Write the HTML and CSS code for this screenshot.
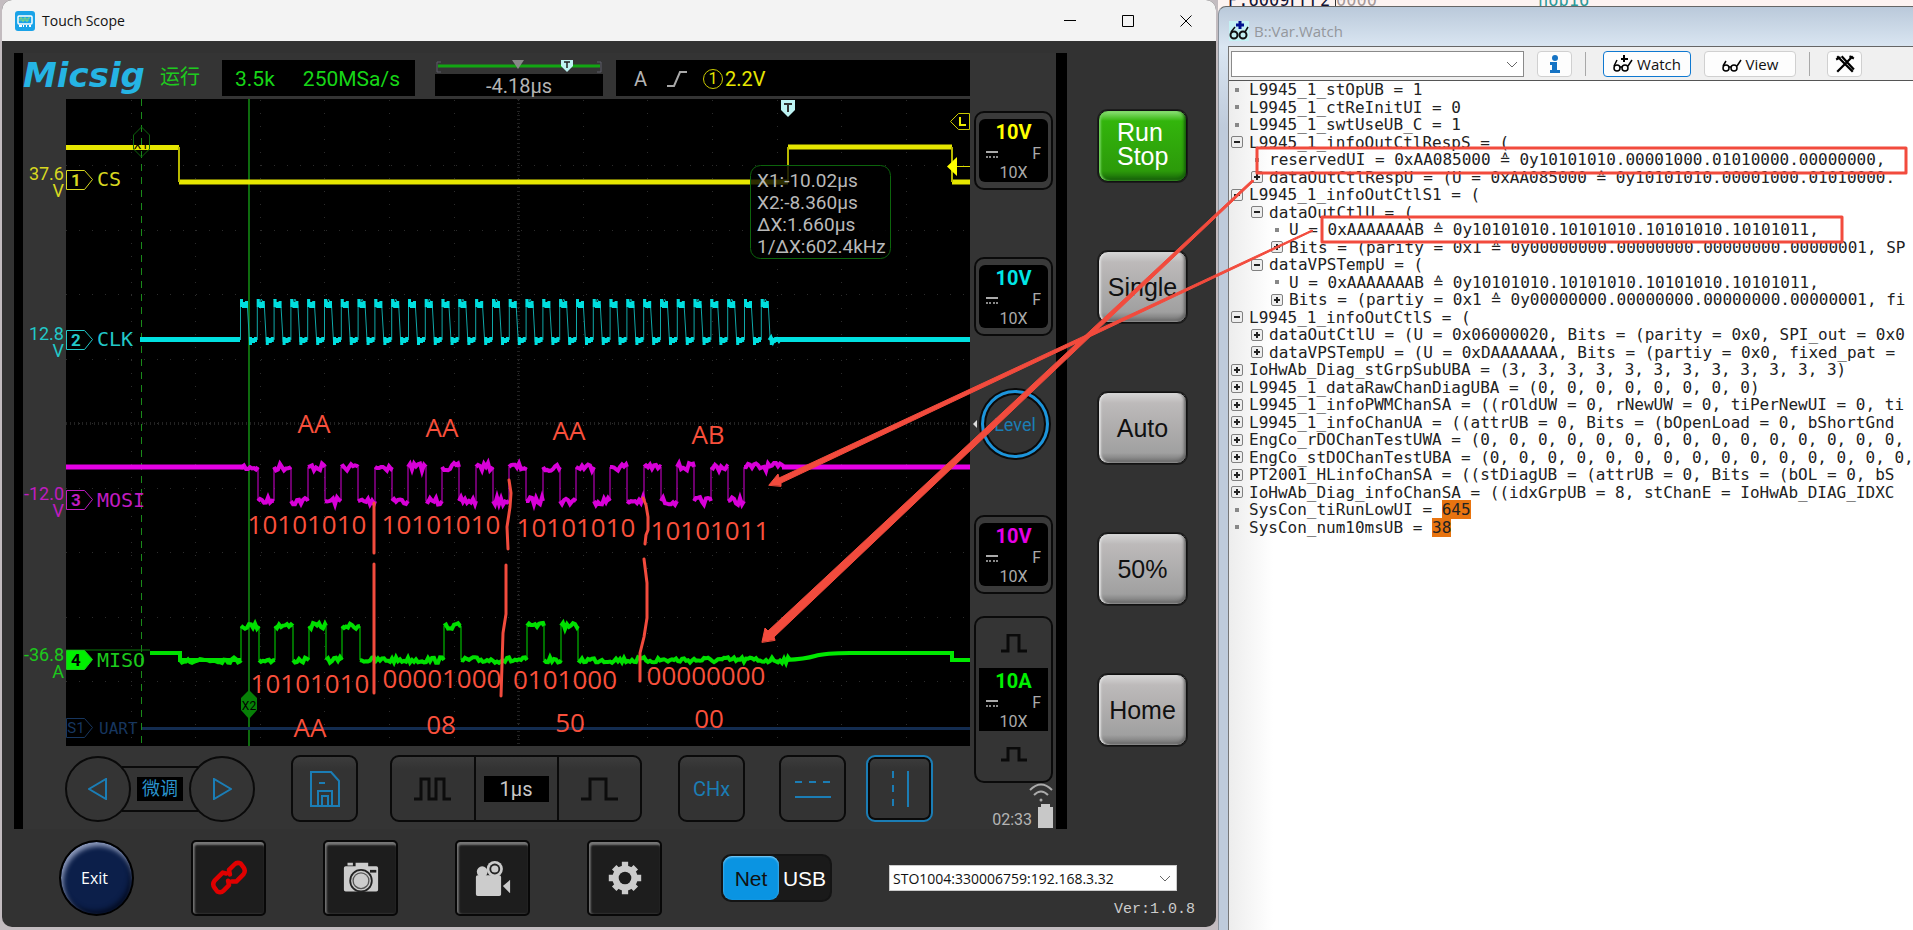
FILE: index.html
```html
<!DOCTYPE html>
<html lang="en">
<head>
  <meta charset="UTF-8">
  <meta name="viewport" content="width=device-width, initial-scale=1.0">
  <title>Touch Scope</title>
  <link rel="stylesheet" href="styles.css">
</head>
<body>
<div class="desktop">

  <!-- Oscilloscope window -->
  <main class="scope">
    <header class="titlebar">
      <svg class="app-icon" viewBox="0 0 20 20">
        <rect width="20" height="20" rx="3" fill="#1aa3e8"/>
        <rect x="3" y="5" width="14" height="8" rx="1" fill="none" stroke="#fff" stroke-width="1.5"/>
        <path d="M5 10V7h2v3h2V7h2v3h2V7h2" fill="none" stroke="#8fdc6a"/>
        <path d="M4 15h3m1 0h1m2 0h1m2 0h2" stroke="#fff" stroke-width="2"/>
      </svg>
      <h1>Touch Scope</h1>
      <button class="win-btn" aria-label="Minimize"><svg viewBox="0 0 12 12"><path d="M0 5.500h12"/></svg></button>
      <button class="win-btn" aria-label="Maximize"><svg viewBox="0 0 12 12"><path d="M.5 .5h11v11H.5z"/></svg></button>
      <button class="win-btn" aria-label="Close"><svg viewBox="0 0 12 12"><path d="M.5 .5l11 11m0-11l-11 11"/></svg></button>
    </header>

    <div class="scope-body">
      <section class="device">
        <div class="screen">
          <div class="status">
            <div class="logo">Micsig</div>
            <div class="run-state">运行</div>
            <div class="readout sampling"><span>3.5k</span><span>250MSa/s</span></div>
            <div class="timing">
              <svg viewBox="0 0 168 14">
                <path d="M6 2H2v10h4M162 2h4v10h-4" fill="none" stroke="#5c5c68"/>
                <path d="M3 6h162" stroke="#12a512" stroke-width="3"/>
                <path d="M77 0h12l-6 9z" fill="#888"/>
                <path d="M126 0h12v6l-6 6-6-6z" fill="#bdf3f3"/>
                <path d="M129 2h6m-3 0v6" stroke="#222" stroke-width="1.500"/>
              </svg>
              <div class="readout offset">-4.18µs</div>
            </div>
            <div class="readout trigger">
              <span class="mode">A</span>
              <svg viewBox="0 0 20 18"><path d="M0 16h7l6-14h7" fill="none" stroke="#a8a8a8" stroke-width="2"/></svg>
              <span class="source">1</span><span>2.2V</span>
            </div>
          </div>

          <svg class="plot" viewBox="23 99 947 647">
            <rect x="66" y="99" width="904" height="647" fill="#000"/>
            <g id="grid" class="grid"></g>
            <path class="grid-axis" d="M518.500 99V746M66 423.500H970"/>
            <path class="cursor dashed" d="M141.500 99V746"/>
            <path class="cursor" d="M249 99V746"/>
            <path d="M142 728.500H970" stroke="#132c50" stroke-width="3"/>
            <g id="traces" fill="none"></g>

            <path d="M141.500 127l8 8v14l-8 8-8-8v-14z" fill="none" stroke="#0d640d"/>
            <text class="tiny" x="141" y="149" fill="#0d780d">X1</text>
            <path d="M249 690l8 8v12l-8 9-8-9v-12z" fill="#078007"/>
            <text class="tiny" x="249" y="710" fill="#001c00">X2</text>

            <g class="ch1">
              <text class="level" x="64" y="180">37.6</text><text class="level" x="64" y="197">V</text>
              <path class="tag" d="M66.500 170.500h18l8 9-8 10h-18z"/>
              <text class="num" x="76" y="186">1</text><text class="name" x="97" y="186">CS</text>
            </g>
            <g class="ch2">
              <text class="level" x="64" y="340">12.8</text><text class="level" x="64" y="357">V</text>
              <path class="tag" d="M66.500 330.500h18l8 9-8 10h-18z"/>
              <text class="num" x="76" y="346">2</text><text class="name" x="97" y="346">CLK</text>
            </g>
            <g class="ch3">
              <text class="level" x="64" y="500">-12.0</text><text class="level" x="64" y="517">V</text>
              <path class="tag" d="M66.500 490.500h18l8 9-8 10h-18z"/>
              <text class="num" x="76" y="506">3</text><text class="name" x="97" y="507">MOSI</text>
            </g>
            <g class="ch4">
              <text class="level" x="64" y="661">-36.8</text><text class="level" x="64" y="678">A</text>
              <path class="tag solid" d="M66.500 650.500h18l8 9-8 10h-18z"/>
              <text class="num dark" x="76" y="666">4</text><text class="name" x="97" y="667">MISO</text>
            </g>
            <g class="bus">
              <path class="tag" d="M66.500 718.500h18l8 9-8 10h-18z"/>
              <text class="num thin" x="76" y="733">S1</text><text class="name bus-name" x="99" y="734">UART</text>
            </g>

            <path d="M781 100h14v10l-7 7-7-7z" fill="#bdf3f3"/>
            <path d="M784 104h8m-4 0v8" stroke="#333" stroke-width="2"/>
            <path d="M969.500 113.500h-11l-8 8 8 8h11z" fill="none" stroke="#c9c900"/>
            <path d="M960 117v8h6" fill="none" stroke="#ee0" stroke-width="2"/>
            <path d="M957 157v19l-10-9.500z" fill="#ff0"/><path d="M957 166.500h13" stroke="#dd0"/>

            <rect x="750.500" y="165.500" width="140" height="93" rx="10" fill="#000" fill-opacity=".8" stroke="#0c640c"/>
            <g class="measure">
              <text x="757" y="187">X1:-10.02µs</text>
              <text x="757" y="209">X2:-8.360µs</text>
              <text x="757" y="231">ΔX:1.660µs</text>
              <text x="757" y="253">1/ΔX:602.4kHz</text>
            </g>
          </svg>

          <div class="tools">
            <div class="fine-tune">
              <button class="round" aria-label="Previous"><svg viewBox="0 0 20 22"><path d="M18 1v20L1 11z"/></svg></button>
              <div class="fine-link"><span>微调</span></div>
              <button class="round" aria-label="Next"><svg viewBox="0 0 20 22"><path d="M2 1v20l17-10z"/></svg></button>
            </div>
            <button class="tool save" aria-label="Save">
              <svg viewBox="0 0 30 36"><path d="M1 1h20l8 9v25H1zM8 35V20h14v15M12 35V25h6v10M9 12h6"/></svg>
            </button>
            <div class="timebase">
              <button aria-label="Slower"><svg viewBox="0 0 37 24"><path d="M0 22h7V2h8v20h7V2h8v20h7"/></svg></button>
              <div class="tb-value"><span>1µs</span></div>
              <button aria-label="Faster"><svg viewBox="0 0 37 24"><path d="M0 22h9V2h16v20h12"/></svg></button>
            </div>
            <button class="tool channel">CHx</button>
            <button class="tool rows" aria-label="Horizontal cursors"><svg viewBox="0 0 36 36"><path d="M0 11h7m7 0h7m7 0h7M0 26h36"/></svg></button>
            <button class="tool active" aria-label="Vertical cursors"><svg viewBox="0 0 36 36"><path d="M11 0v7m0 7v7m0 7v7M26 0v36"/></svg></button>
          </div>
        </div>

        <div class="channels">
          <button class="chan">
            <span class="chan-face"><b class="c1">10V</b><span class="couple"><i></i>F</span><span>10X</span></span>
          </button>
          <button class="chan">
            <span class="chan-face"><b class="c2">10V</b><span class="couple"><i></i>F</span><span>10X</span></span>
          </button>
          <button class="knob">Level</button>
          <button class="chan">
            <span class="chan-face"><b class="c3">10V</b><span class="couple"><i></i>F</span><span>10X</span></span>
          </button>
          <div class="chan-stack">
            <button aria-label="Scale up"><svg viewBox="0 0 26 19"><path d="M0 17h7V1h11v16h8"/></svg></button>
            <span class="chan-face"><b class="c4">10A</b><span class="couple"><i></i>F</span><span>10X</span></span>
            <button aria-label="Scale down"><svg viewBox="0 0 26 19"><path d="M0 13h7V1h11v12h8"/></svg></button>
          </div>
          <div class="sys">
            <span>02:33</span>
            <svg viewBox="0 0 24 46">
              <path d="M1 7q11-11 22 0M5 12q7-7 14 0" fill="none" stroke="#aaa" stroke-width="2"/>
              <circle cx="12" cy="17" r="1.500" fill="#aaa"/>
              <path d="M9 24h15v21H9zM12 21h9v3h-9z" fill="#c8c8c8"/>
            </svg>
          </div>
        </div>
      </section>

      <aside class="side">
        <button class="key run">Run<br>Stop</button>
        <button class="key">Single</button>
        <button class="key">Auto</button>
        <button class="key">50%</button>
        <button class="key">Home</button>
      </aside>
    </div>

    <footer class="dock">
      <button class="exit">Exit</button>
      <button class="dock-btn" aria-label="Connect">
        <svg viewBox="0 0 40 40" fill="none" stroke="#e00000" stroke-width="5" stroke-linecap="round" stroke-linejoin="round"><path d="M17 15l-4-1-9 9q-3 4 0 8l3 4q4 2 7-1l6-6-1-5"/><path d="M23 24l5 0 8-8q3-4 0-8l-3-4q-4-2-7 1l-6 6 1 5"/></svg>
      </button>
      <button class="dock-btn" aria-label="Screenshot">
        <svg viewBox="0 0 40 40" fill="#ccc"><path d="M3 7q-2 0-2 2v24q0 2 2 2h34q2 0 2-2V9q0-2-2-2h-9V3H14v4zM5 3h6v3H5z"/><circle cx="20" cy="23" r="13" fill="#222"/><circle cx="20" cy="23" r="11" /><circle cx="20" cy="23" r="9.500" fill="#555"/><circle cx="20" cy="23" r="8"/><path d="M30 11h7v3h-7z" fill="#222"/></svg>
      </button>
      <button class="dock-btn" aria-label="Record">
        <svg viewBox="0 0 40 40" fill="#ccc"><circle cx="8" cy="13" r="6"/><circle cx="22" cy="10" r="9"/><circle cx="22" cy="10" r="6" fill="#222"/><circle cx="22" cy="10" r="4"/><path d="M3 17h24q2 0 2 2v19q0 2-2 2H3q-2 0-2-2V19q0-2 2-2zM31 29l8-7v15z"/></svg>
      </button>
      <button class="dock-btn" aria-label="Settings">
        <svg viewBox="0 0 40 40"><g stroke="#ccc" stroke-width="7"><path d="M20 2v36M2 20h36M8 8l24 24M32 8L8 32"/></g><circle cx="20" cy="20" r="14" fill="#ccc"/><circle cx="20" cy="20" r="7" fill="#1d1d1d"/></svg>
      </button>
      <div class="link-mode">
        <input type="radio" name="link" id="net" checked><label for="net">Net</label>
        <input type="radio" name="link" id="usb"><label for="usb">USB</label>
      </div>
      <div class="connection">
        <div class="combo">
          <select aria-label="Device"><option>STO1004:330006759:192.168.3.32</option></select>
          <svg viewBox="0 0 12 8"><path d="M1 1l5 5 5-5"/></svg>
        </div>
        <span class="version">Ver:1.0.8</span>
      </div>
    </footer>
  </main>

  <!-- Debugger watch window -->
  <div class="debugger">
    <div class="listing"><span class="addr">P:6009FFF2</span><span class="code">0000</span><span class="mnemonic">nop16</span></div>
    <section class="watch">
      <header class="watch-title">
        <svg viewBox="0 0 20 20"><rect width="20" height="20" fill="#c4f1f3"/><circle cx="5" cy="14" r="3.500" fill="none" stroke="#111" stroke-width="2"/><circle cx="14" cy="14" r="3.500" fill="none" stroke="#111" stroke-width="2"/><path d="M2 11l4-5M16 11l3-5" stroke="#111" stroke-width="1.500"/><path d="M11 0v8M7 4h8" stroke="#00118f" stroke-width="3"/></svg>
        <h2>B::Var.Watch</h2>
      </header>
      <div class="watch-body">
        <div class="toolbar">
          <div class="combo expr">
            <select aria-label="Expression"><option></option></select>
            <svg viewBox="0 0 12 8"><path d="M1 1l5 5 5-5"/></svg>
          </div>
          <button class="tb-btn info" aria-label="Info"><svg viewBox="0 0 12 18"><circle cx="6" cy="3" r="3" fill="#1573c4"/><path d="M1 7h7v8h3v3H1v-3h2v-5H1z" fill="#1573c4"/></svg></button>
          <span class="sep"></span>
          <button class="tb-btn primary"><svg viewBox="0 0 20 18"><g fill="none" stroke="#000" stroke-width="1.500"><circle cx="4" cy="13" r="3"/><circle cx="12" cy="13" r="3"/><path d="M1 11l3-6M15 11l4-6M7 12h2"/></g><path d="M11 0v7M8 4h7" stroke="#000" stroke-width="2"/></svg>Watch</button>
          <button class="tb-btn view"><svg viewBox="0 0 20 18"><g fill="none" stroke="#000" stroke-width="1.500"><circle cx="4" cy="13" r="3"/><circle cx="12" cy="13" r="3"/><path d="M1 11l3-5M15 11l4-6M7 12h2"/></g></svg>View</button>
          <span class="sep"></span>
          <button class="tb-btn clear" aria-label="Clear"><svg viewBox="0 0 18 16"><path d="M2 1l14 14M1 4l4-2M6 1l11 12M16 1L2 15M13 1l4 2" stroke="#000" stroke-width="2"/></svg></button>
        </div>
        <div class="vars">
          <div class="row"><i class="dot"></i><span>L9945_1_stOpUB = 1</span></div>
          <div class="row"><i class="dot"></i><span>L9945_1_ctReInitUI = 0</span></div>
          <div class="row"><i class="dot"></i><span>L9945_1_swtUseUB_C = 1</span></div>
          <div class="row"><button class="fold open" aria-label="Collapse"></button><span>L9945_1_infoOutCtlRespS = (</span></div>
          <div class="row in1"><i class="dot"></i><span>reservedUI = 0xAA085000 ≙ 0y10101010.00001000.01010000.00000000,</span></div>
          <div class="row in1"><button class="fold" aria-label="Expand"></button><span>dataOutCtlRespU = (U = 0xAA085000 ≙ 0y10101010.00001000.01010000.</span></div>
          <div class="row"><button class="fold open" aria-label="Collapse"></button><span>L9945_1_infoOutCtlS1 = (</span></div>
          <div class="row in1"><button class="fold open" aria-label="Collapse"></button><span>dataOutCtlU = (</span></div>
          <div class="row in2"><i class="dot"></i><span>U = 0xAAAAAAAB ≙ 0y10101010.10101010.10101010.10101011,</span></div>
          <div class="row in2"><button class="fold" aria-label="Expand"></button><span>Bits = (parity = 0x1 ≙ 0y00000000.00000000.00000000.00000001, SP</span></div>
          <div class="row in1"><button class="fold open" aria-label="Collapse"></button><span>dataVPSTempU = (</span></div>
          <div class="row in2"><i class="dot"></i><span>U = 0xAAAAAAAB ≙ 0y10101010.10101010.10101010.10101011,</span></div>
          <div class="row in2"><button class="fold" aria-label="Expand"></button><span>Bits = (partiy = 0x1 ≙ 0y00000000.00000000.00000000.00000001, fi</span></div>
          <div class="row"><button class="fold open" aria-label="Collapse"></button><span>L9945_1_infoOutCtlS = (</span></div>
          <div class="row in1"><button class="fold" aria-label="Expand"></button><span>dataOutCtlU = (U = 0x06000020, Bits = (parity = 0x0, SPI_out = 0x0</span></div>
          <div class="row in1"><button class="fold" aria-label="Expand"></button><span>dataVPSTempU = (U = 0xDAAAAAAA, Bits = (partiy = 0x0, fixed_pat = </span></div>
          <div class="row"><button class="fold" aria-label="Expand"></button><span>IoHwAb_Diag_stGrpSubUBA = (3, 3, 3, 3, 3, 3, 3, 3, 3, 3, 3, 3)</span></div>
          <div class="row"><button class="fold" aria-label="Expand"></button><span>L9945_1_dataRawChanDiagUBA = (0, 0, 0, 0, 0, 0, 0, 0)</span></div>
          <div class="row"><button class="fold" aria-label="Expand"></button><span>L9945_1_infoPWMChanSA = ((rOldUW = 0, rNewUW = 0, tiPerNewUI = 0, ti</span></div>
          <div class="row"><button class="fold" aria-label="Expand"></button><span>L9945_1_infoChanUA = ((attrUB = 0, Bits = (bOpenLoad = 0, bShortGnd </span></div>
          <div class="row"><button class="fold" aria-label="Expand"></button><span>EngCo_rDOChanTestUWA = (0, 0, 0, 0, 0, 0, 0, 0, 0, 0, 0, 0, 0, 0, 0, 0</span></div>
          <div class="row"><button class="fold" aria-label="Expand"></button><span>EngCo_stDOChanTestUBA = (0, 0, 0, 0, 0, 0, 0, 0, 0, 0, 0, 0, 0, 0, 0,</span></div>
          <div class="row"><button class="fold" aria-label="Expand"></button><span>PT2001_HLinfoChanSA = ((stDiagUB = (attrUB = 0, Bits = (bOL = 0, bS</span></div>
          <div class="row"><button class="fold" aria-label="Expand"></button><span>IoHwAb_Diag_infoChanSA = ((idxGrpUB = 8, stChanE = IoHwAb_DIAG_IDXC</span></div>
          <div class="row"><i class="dot"></i><span>SysCon_tiRunLowUI = <mark>645</mark></span></div>
          <div class="row"><i class="dot"></i><span>SysCon_num10msUB = <mark>38</mark></span></div>
        </div>
      </div>
    </section>
  </div>

  <!-- Hand-drawn notes over both windows -->
  <svg class="notes" viewBox="0 0 1913 930">
    <rect x="1257" y="148" width="649" height="25"/>
    <rect x="1322" y="217" width="520" height="25"/>
    <path d="M374 503V553M374 564V693"/>
    <path d="M509 480l2 13-1 14-3 20 1 22M506 565v49l-3 19-2 63"/>
    <path d="M643 498l3 7 2 12v13l-2 5-1 9M644 559l3 24v35l-3 19-4 16v28"/>
    <path class="arrow" d="M769 485l9-11 1 4L1312 230l1 1L781 483v3z"/>
    <path class="arrow" d="M762 642l3-14 3 3L1252 180l2 1L774 637l1 3z"/>
    <text x="314" y="433">AA</text>
    <text x="442" y="437">AA</text>
    <text x="569" y="440">AA</text>
    <text x="708" y="444">AB</text>
    <text x="307" y="534">10101010</text>
    <text x="441" y="534">10101010</text>
    <text x="576" y="537">10101010</text>
    <text x="710" y="540">10101011</text>
    <text x="310" y="693">10101010</text>
    <text x="442" y="688">00001000</text>
    <text x="565" y="689">0101000</text>
    <text x="706" y="685">00000000</text>
    <text x="310" y="737">AA</text>
    <text x="441" y="734">08</text>
    <text x="570" y="732">50</text>
    <text x="709" y="728">00</text>
  </svg>
</div>
<script src="script.js"></script>
</body>
</html>
```

FILE: styles.css
```css
* {
  box-sizing: border-box;
}

body {
  margin: 0;
  background: #c3bcc0;
  font-family: "Open Sans", sans-serif;
}

button {
  margin: 0;
  padding: 0;
  border: none;
  background: none;
  font-family: inherit;
  cursor: pointer;
}

svg {
  display: block;
}

.desktop {
  position: relative;
  display: flex;
  align-items: flex-start;
  gap: 2px;
  min-height: 100vh;
  padding-left: 2px;
  overflow: hidden;
}

/* ---------- scope window ---------- */
.scope {
  flex: 1214 1 0;
  min-width: 0;
  background: #323232;
  border-radius: 10px;
  overflow: hidden;
}

.titlebar {
  display: flex;
  align-items: center;
  height: 41px;
  padding: 0 1px 0 13px;
  background: #f3f3f3;
}

.app-icon {
  width: 20px;
  height: 20px;
}

.titlebar h1 {
  flex: 1;
  margin: 0 0 0 7px;
  font-size: 14px;
  font-weight: 400;
  color: #111;
}

.win-btn {
  width: 58px;
  height: 40px;
}

.win-btn svg {
  width: 12px;
  height: 12px;
  margin: auto;
  fill: none;
  stroke: #000;
}

.scope-body {
  display: flex;
  padding: 12px 29px 0 12px;
}

.device {
  flex: 1;
  min-width: 0;
  display: flex;
  border-left: 9px solid #000;
  border-right: 11px solid #000;
  background: #343434;
  font-family: Roboto, "Noto Sans CJK SC", sans-serif;
}

.screen {
  flex: 1;
  min-width: 0;
}

.status {
  display: flex;
  height: 46px;
  padding: 7px 0 3px;
}

.logo {
  width: 130px;
  font: italic 700 34px/30px "DejaVu Sans", sans-serif;
  color: #25b4e4;
}

.run-state {
  width: 69px;
  padding-left: 7px;
  font-size: 20px;
  line-height: 34px;
  color: #1ecb1e;
}

.readout {
  background: #000;
  font-size: 20px;
  color: #b4b4b4;
}

.sampling {
  display: flex;
  align-items: center;
  justify-content: space-between;
  width: 193px;
  padding: 2px 15px 0 13px;
  color: #17d517;
  font-size: 21px;
}

.timing {
  width: 168px;
  margin: 0 13px 0 20px;
}

.timing svg {
  width: 168px;
  height: 14px;
}

.offset {
  height: 22px;
  line-height: 24px;
  text-align: center;
}

.trigger {
  flex: 1;
  display: flex;
  align-items: center;
  padding: 2px 0 0 18px;
  color: #e6e600;
}

.trigger .mode {
  color: #b4b4b4;
}

.trigger svg {
  width: 20px;
  height: 18px;
  margin: 0 16px 0 20px;
}

.source {
  width: 20px;
  height: 20px;
  margin-right: 2px;
  border: 1px solid #c9c900;
  border-radius: 50%;
  font-size: 16px;
  line-height: 18px;
  text-align: center;
}

.plot {
  width: 100%;
  height: auto;
}

.grid {
  stroke: #2c2c2c;
  stroke-dasharray: 1 12;
}

.grid-axis {
  stroke: #222;
  stroke-width: 3;
  stroke-dasharray: 1 3;
}

.cursor {
  stroke: #0e6b0e;
  stroke-width: 2;
}

.cursor.dashed {
  stroke: #1a8a1a;
  stroke-width: 1;
  stroke-dasharray: 7 6;
}

.plot text {
  font-size: 18px;
  fill: currentColor;
}

.plot .level {
  text-anchor: end;
}

.plot .num {
  font-weight: 700;
  font-size: 17px;
  text-anchor: middle;
}

.plot .num.dark {
  fill: #000;
}

.plot .num.thin {
  font-weight: 400;
  font-size: 15px;
}

.plot .name {
  font-family: "DejaVu Sans Mono", monospace;
  font-size: 20px;
}

.plot .bus-name {
  font-size: 16px;
}

.plot .tiny {
  font-size: 12px;
  text-anchor: middle;
}

.tag {
  fill: none;
  stroke: currentColor;
}

.tag.solid {
  fill: #00f000;
}

.measure {
  color: #b9b9b9;
}

.plot .measure text {
  font-size: 19px;
}

.ch1 { color: #d8d820; }
.ch2 { color: #22c8c8; }
.ch3 { color: #c01cc0; }
.ch4 { color: #1cc81c; }
.bus { color: #17365f; }

/* bottom tools */
.tools {
  display: flex;
  height: 83px;
  padding: 9px 0 0 42px;
}

.fine-tune {
  display: flex;
  align-items: center;
  height: 67px;
}

.round {
  z-index: 1;
  width: 66px;
  height: 66px;
  border: 2px solid #0a0a0a;
  border-radius: 50%;
  background: #343434;
}

.round svg {
  width: 20px;
  height: 22px;
  margin: auto;
}

.tools svg {
  fill: none;
  stroke: #1b7db5;
  stroke-width: 2;
}

.fine-link {
  display: flex;
  align-items: center;
  justify-content: center;
  width: 76px;
  height: 46px;
  margin: 0 -9px;
  border: solid #0a0a0a;
  border-width: 2px 0;
}

.fine-link span {
  padding: 0 5px;
  background: #000;
  color: #2a94cc;
  font-size: 18px;
  line-height: 24px;
}

.tool {
  display: flex;
  align-items: center;
  justify-content: center;
  width: 67px;
  height: 67px;
  border: 2px solid #0a0a0a;
  border-radius: 9px;
  background: linear-gradient(#3c3c3c, #333 12px);
  color: #1b7db5;
}

.tool svg {
  width: 36px;
  height: 36px;
}

.save {
  margin: 0 32px 0 36px;
}

.save svg {
  width: 30px;
}

.channel {
  margin: 0 34px 0 36px;
  font-size: 20px;
}

.rows {
  margin-right: 20px;
}

.tool.active {
  border-color: #1b7db5;
  box-shadow: inset 0 0 0 2px #0a0a0a;
}

.timebase {
  display: flex;
  width: 252px;
  height: 67px;
  border: 2px solid #0a0a0a;
  border-radius: 9px;
  background: linear-gradient(#3c3c3c, #333 12px);
}

.timebase button {
  flex: 1;
}

.timebase svg {
  width: 37px;
  height: 24px;
  margin: auto;
  stroke: #0c0c0c;
  stroke-width: 3;
}

.tb-value {
  display: flex;
  align-items: center;
  justify-content: center;
  width: 85px;
  border: solid #0a0a0a;
  border-width: 0 2px;
}

.tb-value span {
  width: 65px;
  background: #000;
  color: #c8c8c8;
  font-size: 20px;
  line-height: 26px;
  text-align: center;
}

/* channel column */
.channels {
  display: flex;
  flex-direction: column;
  width: 86px;
  padding: 58px 3px 0 4px;
}

.chan {
  height: 79px;
  margin-bottom: 67px;
  padding: 6px 3px;
  border: 2px solid #0a0a0a;
  border-radius: 10px;
  background: #3a3a3a;
}

.chan-face {
  display: flex;
  flex-direction: column;
  align-items: center;
  height: 63px;
  padding: 2px 7px 0;
  border-radius: 6px;
  background: #000;
  color: #aaa;
  font-size: 16px;
  line-height: 16px;
}

.chan-face b {
  font-size: 20px;
  line-height: 22px;
}

.c1 { color: #ff0; }
.c2 { color: #00e6e6; }
.c3 { color: #e600e6; }
.c4 { color: #00f000; }

.couple {
  display: flex;
  align-items: center;
  justify-content: space-between;
  width: 100%;
  line-height: 22px;
}

.couple i {
  width: 12px;
  height: 7px;
  border-top: 2px solid #aaa;
  border-bottom: 2px dotted #888;
}

.knob {
  position: relative;
  width: 68px;
  height: 68px;
  margin: -13px auto 57px 7px;
  border: 3px solid #1c95dc;
  border-radius: 50%;
  background: #333;
  box-shadow: 0 0 0 2px #0a0a0a, inset 0 0 0 2px #0a0a0a;
  color: #1b7db5;
  font-size: 18px;
}

.knob::before {
  content: "";
  position: absolute;
  top: 27px;
  left: -11px;
  border: 4px solid transparent;
  border-right-color: #ddd;
  border-left: 0;
}

.knob + .chan {
  margin-bottom: 22px;
}

.chan-stack {
  display: flex;
  flex-direction: column;
  height: 167px;
  border: 2px solid #0a0a0a;
  border-radius: 10px;
}

.chan-stack button {
  flex: 1;
}

.chan-stack .chan-face {
  margin: 0 3px;
  border-radius: 0;
}

.chan-stack svg {
  width: 26px;
  height: 19px;
  margin: auto;
  fill: none;
  stroke: #0a0a0a;
  stroke-width: 3;
}

.sys {
  display: flex;
  align-items: flex-end;
  justify-content: flex-end;
  color: #b4b4b4;
  font-size: 16px;
}

.sys svg {
  width: 24px;
  height: 46px;
  margin-left: -3px;
}

/* hardware keys */
.side {
  display: flex;
  flex-direction: column;
  gap: 69px;
  padding: 57px 0 0 31px;
}

.key {
  width: 89px;
  height: 72px;
  border: 1px solid #111;
  border-radius: 10px;
  background: linear-gradient(#d6d6d6, #bdbaba 10px, #a0a0a0 60px, #707070);
  box-shadow: 0 0 0 1px #1c1c1c, inset 2px 0 2px #ddd, inset -2px -2px 3px #666;
  color: #111;
  font-family: "Liberation Sans", Arial, sans-serif;
  font-size: 25px;
  line-height: 24px;
}

.key.run {
  padding: 0 0 4px 18px;
  background: linear-gradient(#8fe27a, #33b50c 10px, #2c9a0a 60px, #17610a);
  box-shadow: 0 0 0 1px #1c1c1c, inset 2px 0 2px #6fd058, inset -2px -2px 3px #17610a;
  color: #fff;
  text-align: left;
}

/* dock */
.dock {
  display: flex;
  align-items: flex-start;
  gap: 57px;
  height: 98px;
  padding: 11px 21px 0 57px;
}

.exit {
  width: 75px;
  height: 76px;
  padding-right: 4px;
  border: 2px solid #000;
  border-radius: 50%;
  background: #0c1f4a;
  box-shadow: inset 2px 4px 5px #8f9cbd, inset -2px -3px 5px #040c22;
  color: #fff;
  font-size: 16px;
}

.dock-btn {
  width: 75px;
  height: 76px;
  border: 2px solid #080808;
  border-radius: 5px;
  background: #1d1d1d;
  box-shadow: inset 1px 3px 2px #777, inset 2px 0 2px #555;
}

.dock-btn svg {
  width: 40px;
  height: 36px;
  margin: auto;
}

.link-mode {
  display: flex;
  width: 111px;
  height: 48px;
  margin: 14px 0 0 2px;
  border: 2px solid #141414;
  border-radius: 10px;
  background: #1a1a1a;
  font: 21px/46px "Liberation Sans", Arial, sans-serif;
  text-align: center;
}

.link-mode input {
  position: absolute;
  opacity: 0;
}

.link-mode label {
  flex: 1;
  color: #fff;
}

.link-mode input:checked + label {
  flex: 0 0 56px;
  border-radius: 9px;
  background: #0a94e2;
  box-shadow: inset 0 1px 2px #8fd2f7;
  color: #111;
}

.connection {
  flex: 1;
  display: flex;
  flex-direction: column;
}

.combo {
  position: relative;
}

.combo select {
  appearance: none;
  display: block;
  width: 100%;
  height: 26px;
  padding: 0 3px;
  border: 1px solid #ccc;
  border-radius: 0;
  background: #fff;
  color: #111;
  font: 14px "Open Sans", sans-serif;
}

.combo svg {
  position: absolute;
  top: 10px;
  right: 6px;
  width: 12px;
  height: 8px;
  fill: none;
  stroke: #666;
  pointer-events: none;
}

.connection .combo {
  margin: 25px 18px 10px 0;
}

.version {
  color: #ccc;
  font: 15px/18px "Liberation Mono", monospace;
  text-align: right;
}

/* ---------- debugger ---------- */
.debugger {
  flex: 695 1 0;
  display: flex;
  flex-direction: column;
  min-width: 0;
  min-height: 100vh;
  background: #fdf3f1;
}

.listing {
  display: flex;
  align-items: flex-end;
  height: 6px;
  padding-left: 10px;
  overflow: hidden;
  font: 17px/12px "DejaVu Sans Mono", monospace;
}

.addr {
  width: 108px;
  border-right: 1px solid #333;
  color: #113;
}

.code {
  width: 202px;
  color: #a59a9a;
}

.mnemonic {
  color: #2c9a9a;
}

.watch {
  flex: 1;
  display: flex;
  flex-direction: column;
  padding-left: 9px;
  border-top: 1px solid #666;
  border-left: 1px solid #8a929c;
  border-radius: 8px 0 0 0;
  background: linear-gradient(#bac9da, #dae6f2 40px, #bfcbdb 120px);
}

.watch-title {
  display: flex;
  align-items: center;
  height: 39px;
  padding: 8px 0 0 1px;
}

.watch-title svg {
  width: 20px;
  height: 20px;
}

.watch-title h2 {
  margin: 0 0 0 5px;
  color: #94979c;
  font-size: 15px;
  font-weight: 400;
}

.watch-body {
  flex: 1;
  border-top: 1px solid #666;
  border-left: 1px solid #777;
  background: linear-gradient(90deg, #ededed, #fff 44px);
  overflow: hidden;
}

.toolbar {
  display: flex;
  align-items: center;
  height: 34px;
  padding-left: 2px;
  border-bottom: 1px solid #555;
  background: #f0f0f0;
}

.expr {
  width: 293px;
  margin-right: 13px;
}

.expr select {
  border-color: #8a8a8a;
}

.tb-btn {
  display: flex;
  align-items: center;
  justify-content: center;
  height: 26px;
  border: 1px solid #d0d0d0;
  border-radius: 4px;
  background: #fdfdfd;
  color: #111;
  font-size: 15px;
}

.tb-btn svg {
  width: 20px;
  height: 18px;
  margin-right: 4px;
}

.tb-btn.info,
.tb-btn.clear {
  width: 35px;
}

.tb-btn.info svg,
.tb-btn.clear svg {
  margin: 0;
}

.tb-btn.primary {
  width: 88px;
  margin-right: 13px;
  border-color: #0f78d0;
}

.tb-btn.view {
  width: 92px;
}

.sep {
  width: 1px;
  height: 24px;
  margin: 0 17px 0 13px;
  background: #a8a8a8;
}

.vars {
  display: grid;
  grid-auto-rows: 1fr;
  height: 455px;
  font: 16px/17px "DejaVu Sans Mono", monospace;
  color: #222;
}

.row {
  display: flex;
  align-items: center;
  gap: 4px;
  white-space: pre;
}

.in1 { padding-left: 20px; }
.in2 { padding-left: 40px; }

.dot {
  width: 4px;
  height: 4px;
  margin: 0 6px;
  background: #888;
}

.fold {
  position: relative;
  width: 12px;
  height: 12px;
  margin: 0 2px;
  border: 1px solid #808080;
  border-radius: 2px;
  background: #eee;
}

.fold::before,
.fold::after {
  content: "";
  position: absolute;
  top: 4px;
  left: 2px;
  width: 6px;
  height: 2px;
  background: #222;
}

.fold::after {
  top: 2px;
  left: 4px;
  width: 2px;
  height: 6px;
}

.fold.open::after {
  display: none;
}

mark {
  background: #e87410;
  color: #222;
}

/* ---------- notes ---------- */
.notes {
  position: absolute;
  top: 0;
  left: 0;
  width: 100%;
  height: auto;
  fill: none;
  stroke: #f24b3d;
  stroke-width: 3;
  stroke-linecap: round;
  stroke-linejoin: round;
  pointer-events: none;
}

.notes .arrow {
  fill: #f24b3d;
  stroke-width: 1;
}

.notes text {
  fill: #f9503c;
  stroke: none;
  font-size: 26px;
  text-anchor: middle;
}
```

FILE: script.js
```js
const NS = "http://www.w3.org/2000/svg";
const grid = document.getElementById("grid");
const traces = document.getElementById("traces");

function addPath(parent, d, color, width) {
  const p = document.createElementNS(NS, "path");
  p.setAttribute("d", d);
  if (color) p.setAttribute("stroke", color);
  if (width) p.setAttribute("stroke-width", width);
  parent.appendChild(p);
}

// small repeatable ripple
let seed = 7;
function ripple(size) {
  seed = (seed * 16807) % 2147483647;
  return (seed / 2147483647 - 0.5) * 2 * size;
}

// grid divisions
for (let i = 1; i < 14; i++) addPath(grid, `M${Math.round(66 + i * 64.6)}.5 100V746`);
for (let i = 0; i < 9; i++) addPath(grid, `M66 ${Math.round(165 + i * 64.5)}.5H970`);

function noisy(x1, x2, y, size) {
  let d = `M${x1} ${y}`;
  for (let x = x1 + 2; x < x2; x += 2) d += `L${x} ${(y + ripple(size)).toFixed(1)}`;
  return d + `L${x2} ${y}`;
}

// edges: list of [x, level], thin verticals joined by thick noisy levels
function square(edges, end, color, size) {
  edges.forEach(([x, y], i) => {
    const next = edges[i + 1];
    const stop = next ? next[0] : end;
    addPath(traces, noisy(x, stop, y, size), color, 4);
    if (next) addPath(traces, `M${stop} ${y}V${next[1]}`, color, 1);
  });
}

// CS
addPath(traces, "M66 147.500H179M179 182H788M788 147H952M952 182H970", "#e6e600", 5);
addPath(traces, "M179 147V182M788 147V182M952 147V182", "#b8b800", 2);

// CLK, 32 pulses
let clk = "";
for (let i = 0; i < 32; i++) {
  const x = 240.5 + i * 16.8;
  const high = i % 2 ? 301 : 304;
  clk += `M${x} 340V299L${x + 2} ${high + 3}L${x + 4} ${high - 2}L${x + 7} ${high + 4}L${x + 9} 342L${x + 12} 340L${x + 14} 342L${x + 16.8} 338`;
}
addPath(traces, clk, "#10a8a8", 1);
let clkTips = "";
for (let i = 0; i < 32; i++) {
  const x = 240.5 + i * 16.8;
  clkTips += `M${x + 1} 299V307M${x + 3} 302V308M${x + 6} 301V308M${x + 10} 337V345M${x + 13} 338V343M${x + 15} 337V342`;
}
addPath(traces, clkTips, "#00dede", 3);
addPath(traces, "M140 339.500H240M778 339.500H970", "#00e0e0", 5);
addPath(traces, noisy(769, 780, 340, 3), "#00e0e0", 3);

// MOSI
const mosi = [[240, 467]];
for (let i = 0; i < 15; i++) {
  mosi.push([Math.round(257.5 + i * 33.6), 501], [Math.round(274 + i * 33.6), 467]);
}
square(mosi, 784, "#d800d8", 4);
addPath(traces, "M66 467H244M782 467H970", "#e600e6", 5);

// MISO
const miso = [[180, 660]];
[[241, 259], [275, 293], [309, 326], [342, 360], [444, 461], [527, 544], [561, 578]].forEach(([up, down]) => {
  miso.push([up, 626], [down, 660]);
});
square(miso, 790, "#00e000", 3);
addPath(traces, "M150 653H180V660H241", "#00e000", 4);
addPath(traces, "M66 650H150", "#0a780a", 1);
addPath(traces, "M786 660Q805 659 815 656T850 653H952V660H970", "#00e800", 4);
```
